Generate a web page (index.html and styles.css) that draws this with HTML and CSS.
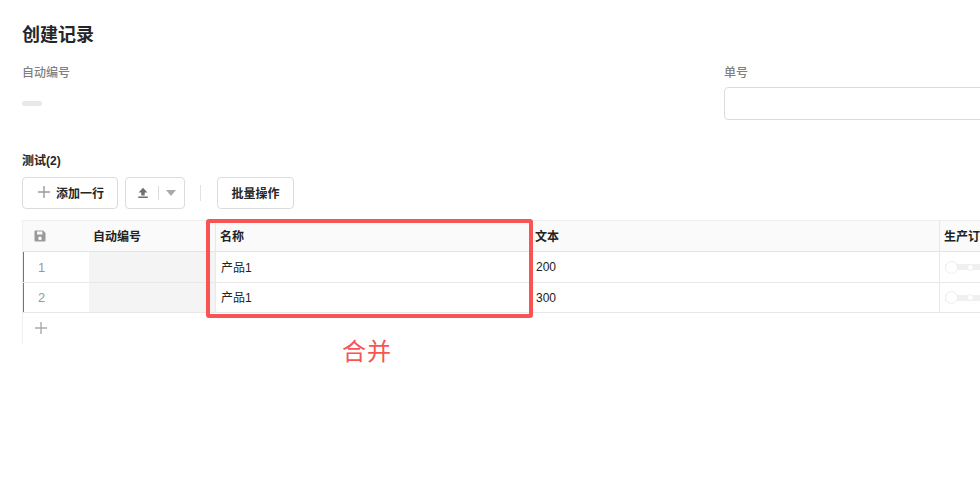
FILE: index.html
```html
<!DOCTYPE html>
<html lang="zh-CN">

<head>
    <meta charset="UTF-8">
    <meta name="viewport" content="width=device-width, initial-scale=1.0">
    <title>创建记录</title>
    <link rel="stylesheet" href="styles.css">
</head>

<body>
    <div class="page">
        <h1 class="title">创建记录</h1>

        <div class="formRow">
            <div class="field">
                <label class="fieldLabel">自动编号</label>
                <div class="fieldEmpty"><span class="emptyBar"></span></div>
            </div>
            <div class="field">
                <label class="fieldLabel" for="danhao">单号</label>
                <input type="text" id="danhao" class="fieldInput">
            </div>
        </div>

        <h2 class="subTitle">测试(2)</h2>

        <div class="toolbar">
            <button class="btn btnAdd">
                <svg class="iconPlus" viewBox="0 0 12 12" width="12" height="12">
                    <path d="M6 0v12M0 6h12" stroke="#999" stroke-width="1.4" fill="none" />
                </svg>
                添加一行
            </button>
            <div class="btn btnImport">
                <svg viewBox="0 0 12 12" width="12" height="12">
                    <path d="M6 0.8L10.4 5.6H7.7v2.8H4.3V5.6H1.6zM1.2 9.6h9.6v1.4H1.2z" fill="#707070" />
                </svg>
                <span class="btnSep"></span>
                <span class="caret"></span>
            </div>
            <span class="toolSep"></span>
            <button class="btn btnBatch">批量操作</button>
        </div>

        <div class="tableWrap">
            <table class="grid">
                <colgroup>
                    <col class="colNo">
                    <col class="colAuto">
                    <col class="colName">
                    <col class="colText">
                    <col class="colOrder">
                </colgroup>
                <thead>
                    <tr>
                        <th class="cellNo">
                            <svg viewBox="0 0 14 14" width="14" height="14">
                                <path fill-rule="evenodd" d="M2.5 1.5h7.6l2.4 2.4v7.6a1 1 0 0 1-1 1h-9a1 1 0 0 1-1-1v-9a1 1 0 0 1 1-1zM4 2.6v2.8h5.4V2.6zM7 7.6a1.8 1.8 0 1 0 0 3.6 1.8 1.8 0 0 0 0-3.6z" fill="#999" />
                            </svg>
                        </th>
                        <th>自动编号</th>
                        <th class="lined">名称</th>
                        <th>文本</th>
                        <th class="lined">生产订</th>
                    </tr>
                </thead>
                <tbody>
                    <tr>
                        <td class="cellNo rowMark">1</td>
                        <td class="cellAuto"></td>
                        <td class="lined cellName">产品1</td>
                        <td>200</td>
                        <td class="lined"><span class="lookup"><i class="dotBig"></i><i class="dotSmall"></i></span></td>
                    </tr>
                    <tr>
                        <td class="cellNo rowMark">2</td>
                        <td class="cellAuto"></td>
                        <td class="lined cellName">产品1</td>
                        <td>300</td>
                        <td class="lined"><span class="lookup"><i class="dotBig"></i><i class="dotSmall"></i></span></td>
                    </tr>
                </tbody>
            </table>
            <div class="addRow">
                <svg viewBox="0 0 12 12" width="12" height="12">
                    <path d="M6 0v12M0 6h12" stroke="#aaa" stroke-width="1.4" fill="none" />
                </svg>
            </div>

            <!-- khung đỏ chú thích nằm đè lên bảng -->
            <div class="markBox"></div>
            <div class="markText">合并</div>
        </div>
    </div>
</body>

</html>
```

FILE: styles.css
```css
html,
body {
    margin: 0;
    height: 100%;
    overflow: hidden;
    background: #fff;
}

body {
    font-family: "Liberation Sans", "Noto Sans CJK SC", sans-serif;
    color: #222;
}

.page {
    padding: 23px 0 0 22px;
    width: 1400px;
}

.title {
    margin: 0;
    font-size: 18px;
    line-height: 24px;
    font-weight: 700;
    color: #262626;
}

.formRow {
    display: grid;
    grid-template-columns: 702px 400px;
    margin-top: 17px;
}

.fieldLabel {
    display: block;
    font-size: 12px;
    line-height: 18px;
    font-weight: 500;
    color: #7f7f7f;
}

.fieldEmpty {
    height: 33px;
    margin-top: 5px;
    display: flex;
    align-items: center;
}

.emptyBar {
    width: 20px;
    height: 5px;
    border-radius: 3px;
    background: #e8e8e8;
}

.fieldInput {
    display: block;
    box-sizing: border-box;
    width: 100%;
    height: 33px;
    margin-top: 5px;
    border: 1px solid #dcdcdc;
    border-radius: 4px;
    background: #fff;
}

.subTitle {
    margin: 32px 0 0;
    font-size: 12px;
    line-height: 18px;
    font-weight: 700;
    color: #262626;
}

.toolbar {
    display: flex;
    align-items: center;
    margin-top: 7px;
    height: 32px;
}

.btn {
    box-sizing: border-box;
    height: 32px;
    display: flex;
    align-items: center;
    border: 1px solid #dcdcdc;
    border-radius: 4px;
    background: #fff;
    font: 700 12px "Liberation Sans", "Noto Sans CJK SC", sans-serif;
    color: #262626;
    padding: 0 0 2px;
}

.btnAdd {
    width: 96px;
    padding-left: 15px;
    gap: 6px;
}

.btnImport {
    width: 60px;
    margin-left: 7px;
    padding: 0 0 0 11px;
}

.btnSep {
    width: 1px;
    height: 14px;
    margin: 0 7px 0 9px;
    background: #ddd;
}

.caret {
    width: 0;
    height: 0;
    border-left: 5px solid transparent;
    border-right: 5px solid transparent;
    border-top: 6px solid #aaa;
}

.toolSep {
    width: 1px;
    height: 16px;
    margin: 0 16px 0 15px;
    background: #e2e2e2;
}

.btnBatch {
    width: 77px;
    justify-content: center;
}

.tableWrap {
    position: relative;
    margin-top: 11px;
}

.grid {
    border-collapse: separate;
    border-spacing: 0;
    table-layout: fixed;
    width: 1117px;
    font-size: 12px;
    border-left: 1px solid #efefef;
}

.colNo {
    width: 66px;
}

.colAuto {
    width: 126px;
}

.colName {
    width: 316px;
}

.colText {
    width: 408px;
}

.colOrder {
    width: 200px;
}

.grid th,
.grid td {
    box-sizing: border-box;
}

.grid th {
    height: 32px;
    padding: 0 4px 2px;
    text-align: left;
    font-weight: 700;
    color: #222;
    background: #fafafa;
    border-top: 1px solid #efefef;
    border-bottom: 1px solid #e4e4e4;
}

.grid td {
    height: 31px;
    padding: 0 5px;
    color: #222;
    border-bottom: 1px solid #e8e8e8;
}

.grid tbody tr:last-child td {
    height: 30px;
}

.grid .lined {
    border-left: 1px solid #e8e8e8;
}

.grid .cellName {
    padding-bottom: 2px;
}

.grid .cellNo {
    padding: 0 0 0 10px;
    color: #999;
    font-size: 13px;
    font-weight: 400;
}

.grid .cellNo svg {
    display: block;
}

.grid .rowMark {
    padding-left: 15px;
    box-shadow: inset 1px 0 0 #4a7bc8;
}

.grid .cellAuto {
    background: #f4f4f4;
}

.lookup {
    display: flex;
    align-items: center;
    width: 60px;
    height: 6px;
    background: #f0f0f0;
}

.dotBig {
    width: 11px;
    height: 11px;
    border: 1px solid #eee;
    border-radius: 50%;
    background: #fff;
    flex: none;
}

.dotSmall {
    width: 5px;
    height: 5px;
    margin-left: 9px;
    border: 1px solid #eee;
    border-radius: 50%;
    background: #fff;
    flex: none;
}

.addRow {
    height: 31px;
    box-sizing: border-box;
    padding: 9px 0 0 12px;
    border-left: 1px solid #efefef;
    width: 100px;
}

.addRow svg {
    display: block;
}

.markBox {
    position: absolute;
    left: 184px;
    top: -1px;
    width: 327px;
    height: 99px;
    box-sizing: border-box;
    border: 4px solid #f95454;
    border-radius: 3px;
}

.markText {
    position: absolute;
    left: 320px;
    top: 116px;
    font-size: 24px;
    letter-spacing: 1px;
    line-height: 32px;
    color: #f95454;
}
```
